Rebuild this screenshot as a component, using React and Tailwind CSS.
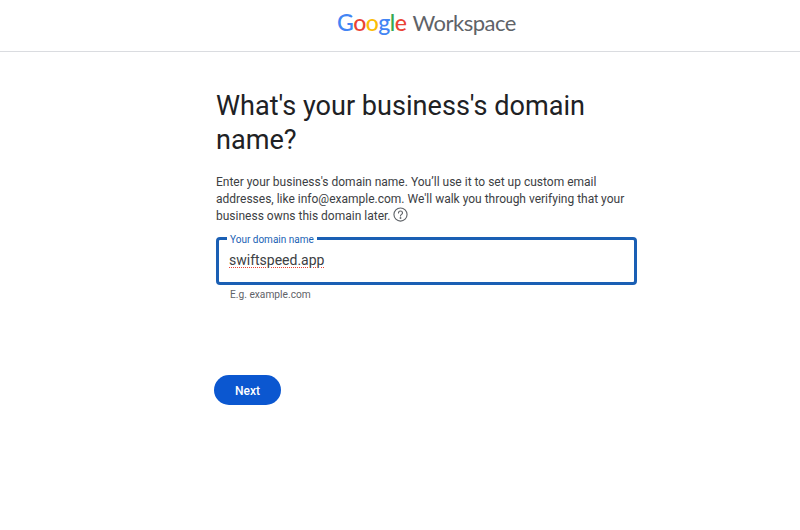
import React from "react";

function Logo() {
  return (
    <div className="flex items-baseline leading-none font-['Lato',sans-serif]">
      <span className="text-[23px] font-medium tracking-[-0.5px]">
        <span className="text-[#4285f4]">G</span>
        <span className="text-[#ea4335]">o</span>
        <span className="text-[#fbbc05]">o</span>
        <span className="text-[#4285f4]">g</span>
        <span className="text-[#34a853]">l</span>
        <span className="text-[#ea4335]">e</span>
      </span>
      <span className="ml-[6px] text-[#5f6368] text-[22px] tracking-[-0.5px]">Workspace</span>
    </div>
  );
}

function HelpIcon() {
  return (
    <svg width="15" height="15" viewBox="0 0 24 24" fill="none" stroke="#5f6368" strokeWidth="1.8" className="ml-[2px] inline-block align-[-4px] -translate-y-[2px]">
      <circle cx="12" cy="12" r="10.5" />
      <path d="M8.8 9.5a3.2 3.2 0 0 1 6.4 0c0 2.2-3.2 2.4-3.2 4.8" strokeLinecap="round" />
      <circle cx="12" cy="17.6" r="0.6" fill="#5f6368" />
    </svg>
  );
}

export default function App() {
  return (
    <div className="min-h-[530px] bg-white font-['Roboto',sans-serif] text-[#202124]">
      <header className="h-[52px] border-b border-[#dadce0] flex items-center justify-center pl-[53px] pb-[6px]">
        <Logo />
      </header>

      <main className="w-[421px] ml-[216px] pt-[38px]">
        <h1 className="text-[27.1px] leading-[33.5px] font-normal w-[400px]">What's your business's domain name?</h1>
        <p className="mt-[17px] text-[12px] leading-[17px] text-[#3c4043]">
          Enter your business's domain name. You’ll use it to set up custom email addresses, like info@example.com. We'll walk you through verifying that your business owns this domain later.
          <HelpIcon />
        </p>

        <div className="relative mt-[12px] h-[48px] border-[3px] border-[#1a5fb4] rounded-[4px] flex items-center pl-[10px] pb-[2px]">
          <span className="absolute left-[8px] -top-[6px] bg-white px-[3px] text-[10px] leading-[12px] text-[#1a5fb4]">Your domain name</span>
          <span className="text-[14px] text-[#3c4043] underline decoration-dotted decoration-[#ea4335] underline-offset-2 decoration-1">swiftspeed.app</span>
        </div>
        <p className="mt-[3px] ml-[14px] text-[10.2px] leading-[14px] text-[#5f6368]">E.g. example.com</p>

        <button className="-ml-[2px] mt-[73px] block w-[67px] h-[30px] pt-[1px] rounded-full bg-[#0b57d0] text-white text-[12px] font-medium">Next</button>
      </main>
    </div>
  );
}
